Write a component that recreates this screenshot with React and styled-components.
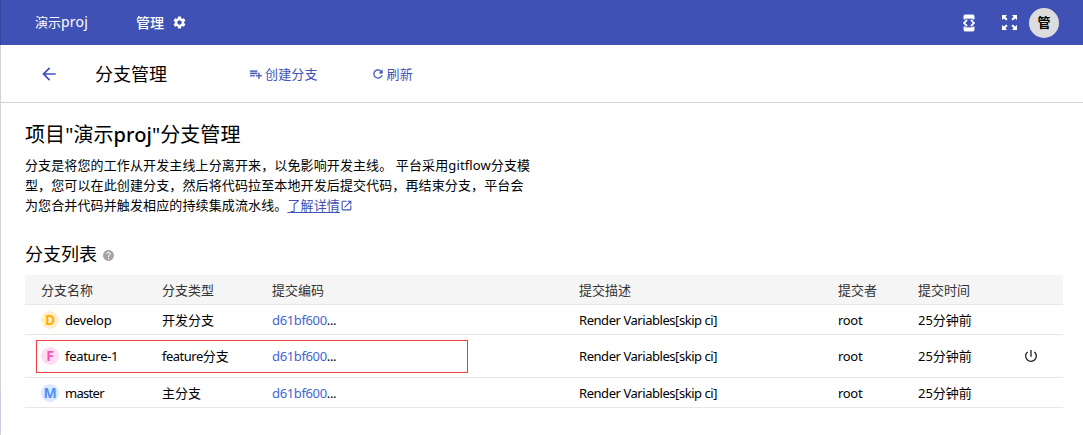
import React from "react";
import styled, { createGlobalStyle } from "styled-components";
import {
  MdSettings,
  MdArrowBack,
  MdRefresh,
  MdOpenInNew,
  MdHelp,
  MdPowerSettingsNew,
} from "react-icons/md";

const GlobalStyle = createGlobalStyle`
  * { box-sizing: border-box; }
  body {
    margin: 0;
    background: #fff;
    color: #000;
    font-family: "Noto Sans", "Noto Sans CJK SC", sans-serif;
    font-size: 13px;
    line-height: 20px;
  }
  svg { display: block; flex: none; }
`;

const Page = styled.div`
  display: flex;
  flex-direction: column;
  height: 435px;
  overflow: hidden;
`;

const TopBar = styled.header`
  display: flex;
  align-items: center;
  height: 45px;
  padding: 0 24px 0 34px;
  background: #3f51b5;
  border-left: 1px solid #3445a0;
  color: #fff;
`;

const Project = styled.span`
  width: 101px;
  padding-bottom: 2px;
`;

const Latin = styled.span`
  font-size: ${(p) => p.$size || 13}px;
  letter-spacing: ${(p) => p.$spacing || 0}px;
`;

const AdminLink = styled.span`
  display: flex;
  align-items: center;
  gap: 8px;
  font-size: 14px;
  font-weight: 500;
`;

const Tools = styled.div`
  display: flex;
  align-items: center;
  margin-left: auto;
`;

const Tool = styled.span`
  display: flex;
  margin-right: ${(p) => p.$gap}px;
`;

const Avatar = styled.span`
  width: 30px;
  height: 30px;
  border-radius: 50%;
  background: #dcdcdc;
  color: #000;
  font-weight: 700;
  line-height: 29px;
  text-align: center;
`;

const Body = styled.div`
  position: relative;
  flex: 1;
  border-left: 1px solid #d3d3d3;
`;

const EdgeMark = styled.div`
  position: absolute;
  left: -1px;
  bottom: 4px;
  width: 1px;
  height: 40px;
  background: #c9cae4;
`;

const PageHeader = styled.div`
  display: flex;
  align-items: center;
  height: 58px;
  padding-left: 38px;
  border-bottom: 1px solid #d3d3d3;
  color: #3f51b5;
`;

const PageTitle = styled.h1`
  width: 154px;
  margin: 0 0 0 36px;
  color: #000;
  font-size: 18px;
  font-weight: 400;
  line-height: 24px;
`;

const Action = styled.span`
  display: flex;
  align-items: center;
  gap: ${(p) => p.$gap}px;
  margin-right: 53px;
  letter-spacing: 0.15px;
`;

const Content = styled.main`
  padding: 18px 20px 0 24px;
`;

const Heading = styled.h2`
  display: flex;
  align-items: center;
  gap: 5px;
  margin: 0;
  font-size: ${(p) => p.$size}px;
  font-weight: 400;
  line-height: 26px;
`;

const ProjectHeading = styled(Heading)`
  padding-top: 1px;
  letter-spacing: 0.08px;
`;

const ListHeading = styled(Heading)`
  line-height: 25px;

  svg { margin-top: 2px; }
`;

const Medium = styled.span`
  font-weight: 500;
`;

const Intro = styled.p`
  margin: 7px 0 27px;
  letter-spacing: 0.12px;
  white-space: nowrap;
`;

const LearnMore = styled.a`
  display: inline-flex;
  align-items: center;
  color: #3f51b5;
`;

const LinkText = styled.span`
  text-decoration: underline;
  text-underline-offset: 2px;
`;

const Table = styled.div`
  position: relative;
  margin-top: 8px;
`;

const Row = styled.div`
  display: grid;
  grid-template-columns: 121px 110px 307px 259px 80px 105px 1fr;
  align-items: center;
  height: ${(p) => p.$height || 30}px;
  padding-left: 16px;
  border-bottom: 1px solid #e6e6e6;
`;

const HeadRow = styled(Row)`
  background: #f5f5f5;
  border-radius: 3px 3px 0 0;
  color: #333;
`;

const NameCell = styled.span`
  display: flex;
  align-items: center;
  gap: 6px;
`;

const Badge = styled.span`
  width: 18px;
  height: 18px;
  border-radius: 50%;
  background: ${(p) => p.$bg};
  color: ${(p) => p.$fg};
  font-size: 14px;
  font-weight: 700;
  line-height: 18px;
  text-align: center;
`;

const CommitCell = styled.span`
  letter-spacing: -0.36px;
`;

const Commit = styled.span`
  color: #3f66d5;
`;

const Highlight = styled.div`
  position: absolute;
  left: 11px;
  top: 65px;
  width: 432px;
  height: 33px;
  border: 1px solid #f23c3c;
`;

const ExpandIcon = () => (
  <svg width="15" height="15" viewBox="0 0 15 15" fill="currentColor">
    <path d="M0 0h5L3.4 1.9 5.6 4.1 4.1 5.6 1.9 3.4 0 5z" />
    <path d="M15 0v5l-1.9-1.6-2.2 2.2-1.5-1.5 2.2-2.2L10 0z" />
    <path d="M0 15v-5l1.9 1.6 2.2-2.2 1.5 1.5-2.2 2.2L5 15z" />
    <path d="M15 15h-5l1.6-1.9-2.2-2.2 1.5-1.5 2.2 2.2L15 10z" />
  </svg>
);

const DeveloperIcon = () => (
  <svg width="18" height="18" viewBox="0 0 24 24" fill="currentColor" stroke="currentColor" strokeWidth="0.5">
    <path d="M5 7V3c0-1.1.9-2 2-2h10c1.1 0 2 .9 2 2v4h-2V6H7v1H5z" />
    <path d="M15.41 16.59 20 12l-4.59-4.59L14 8.83 17.17 12 14 15.17l1.41 1.42z" />
    <path d="M10 15.17 6.83 12 10 8.83 8.59 7.41 4 12l4.59 4.59L10 15.17z" />
    <path d="M17 18H7v-1H5v4c0 1.1.9 2 2 2h10c1.1 0 2-.9 2-2v-4h-2v1z" />
  </svg>
);

const PlaylistAddIcon = () => (
  <svg width="14" height="14" viewBox="0 0 24 24" fill="currentColor" stroke="currentColor" strokeWidth="0.4">
    <path d="M14 10H2v2h12v-2zM14 6H2v2h12V6zM18 14v-4h-2v4h-4v2h4v4h2v-4h4v-2h-4zM2 16h8v-2H2v2z" />
  </svg>
);

const branches = [
  { mark: "D", bg: "#ffefcc", fg: "#ffb100", name: "develop", spacing: -0.25, type: "开发分支" },
  { mark: "F", bg: "#ffdcf1", fg: "#f953ba", name: "feature-1", spacing: -0.3, prefix: "feature", type: "分支", height: 43, closable: true },
  { mark: "M", bg: "#dbe8ff", fg: "#4d90fe", name: "master", spacing: -0.7, type: "主分支" },
];

export default function App() {
  return (
    <Page>
      <GlobalStyle />
      <TopBar>
        <Project>演示<Latin $size={14} $spacing={0.2}>proj</Latin></Project>
        <AdminLink>管理<MdSettings size={15} /></AdminLink>
        <Tools>
          <Tool $gap={24}><DeveloperIcon /></Tool>
          <Tool $gap={12}><ExpandIcon /></Tool>
          <Avatar>管</Avatar>
        </Tools>
      </TopBar>
      <Body>
        <EdgeMark />
        <PageHeader>
          <MdArrowBack size={20} />
          <PageTitle>分支管理</PageTitle>
          <Action $gap={2}><PlaylistAddIcon />创建分支</Action>
          <Action $gap={2}><MdRefresh size={14} />刷新</Action>
        </PageHeader>
        <Content>
          <ProjectHeading $size={20}>
            <span>项目"演示<Medium>proj</Medium>"分支管理</span>
          </ProjectHeading>
          <Intro>
            分支是将您的工作从开发主线上分离开来，以免影响开发主线。 平台采用gitflow分支模<br />
            型，您可以在此创建分支，然后将代码拉至本地开发后提交代码，再结束分支，平台会<br />
            为您合并代码并触发相应的持续集成流水线。
            <LearnMore><LinkText>了解详情</LinkText><MdOpenInNew size={13} /></LearnMore>
          </Intro>
          <ListHeading $size={18}>分支列表<MdHelp size={13} color="#a3a3a3" /></ListHeading>
          <Table>
            <HeadRow>
              <span>分支名称</span>
              <span>分支类型</span>
              <span>提交编码</span>
              <span>提交描述</span>
              <span>提交者</span>
              <span>提交时间</span>
            </HeadRow>
            {branches.map((b) => (
              <Row key={b.name} $height={b.height}>
                <NameCell>
                  <Badge $bg={b.bg} $fg={b.fg}>{b.mark}</Badge>
                  <Latin $spacing={b.spacing}>{b.name}</Latin>
                </NameCell>
                <span>{b.prefix && <Latin $spacing={-0.5}>{b.prefix}</Latin>}{b.type}</span>
                <CommitCell><Commit>d61bf600</Commit>...</CommitCell>
                <Latin $spacing={-0.45}>Render Variables[skip ci]</Latin>
                <Latin $spacing={-0.3}>root</Latin>
                <span>25分钟前</span>
                {b.closable && <MdPowerSettingsNew size={16} color="#222" />}
              </Row>
            ))}
            <Highlight />
          </Table>
        </Content>
      </Body>
    </Page>
  );
}
